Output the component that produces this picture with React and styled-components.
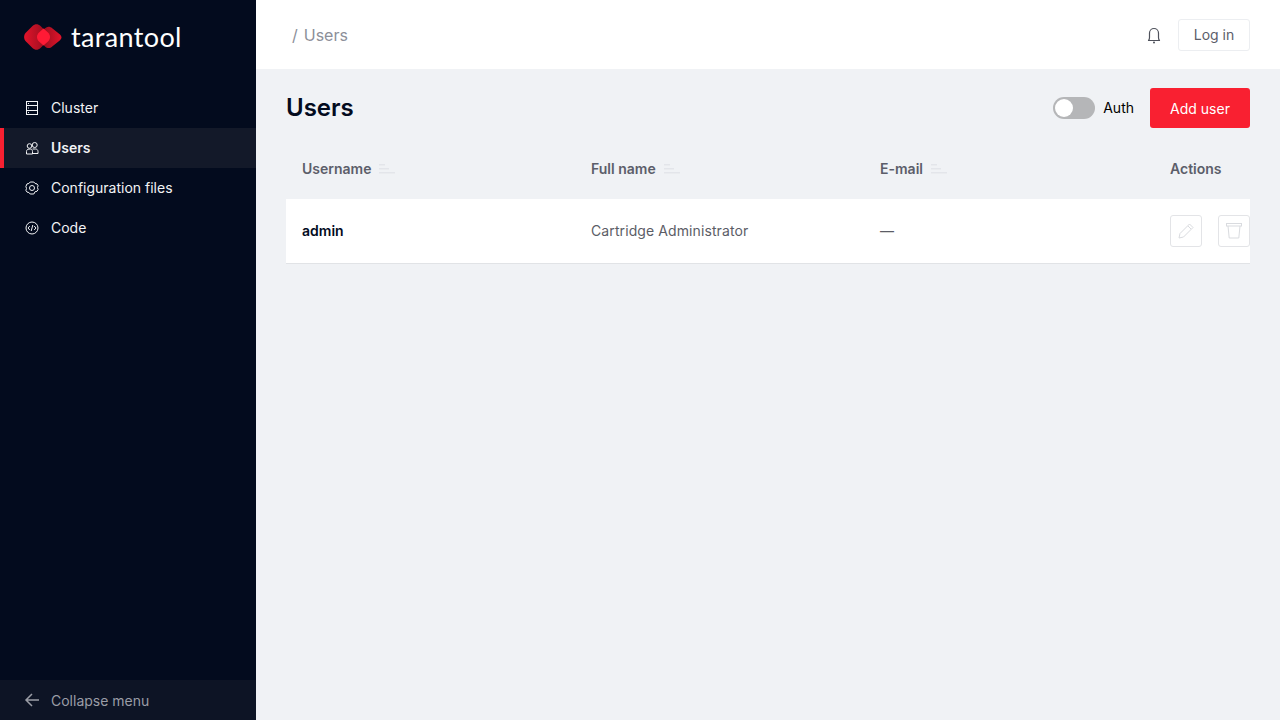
import React from 'react'
import styled, { createGlobalStyle } from 'styled-components'

const GlobalStyle = createGlobalStyle`
    html, body {
        margin: 0;
        padding: 0;
        height: 100%;
        background: #f0f2f5;
        font-family: Inter, "Liberation Sans", sans-serif;
    }
    * {
        box-sizing: border-box;
    }
`;

const Page = styled.div`
    display: flex;
    width: 1280px;
    height: 720px;
    overflow: hidden;
`;

const Sidebar = styled.aside`
    display: flex;
    flex-direction: column;
    flex: 0 0 256px;
    background: #030b1e;
`;

const LogoRow = styled.div`
    display: flex;
    align-items: center;
    gap: 9px;
    height: 74px;
    padding-left: 24px;
`;

const LogoText = styled.span`
    color: #fff;
    font-family: Lato, sans-serif;
    font-size: 27px;
    font-weight: 400;
    letter-spacing: 0.35px;
    line-height: 28px;
`;

const Nav = styled.nav`
    display: flex;
    flex-direction: column;
    flex: 1;
    padding-top: 14px;
`;

const NavItem = styled.a`
    display: flex;
    align-items: center;
    gap: 11px;
    height: 40px;
    padding-left: ${p => (p.$active ? '20px' : '24px')};
    border-left: ${p => (p.$active ? '4px solid #f92031' : 'none')};
    background: ${p => (p.$active ? '#131929' : 'transparent')};
    color: #f2f3f5;
    font-size: 14px;
    font-weight: ${p => (p.$active ? 600 : 400)};
    line-height: 20px;
`;

const Collapse = styled.div`
    display: flex;
    align-items: center;
    gap: 11px;
    height: 40px;
    padding-left: 24px;
    background: #0d1425;
    color: #9a9da6;
    font-size: 14px;
`;

const Main = styled.main`
    display: flex;
    flex-direction: column;
    flex: 1;
    min-width: 0;
`;

const TopBar = styled.header`
    display: flex;
    align-items: center;
    justify-content: space-between;
    height: 69px;
    padding: 0 30px 0 36px;
    background: #fff;
`;

const Breadcrumb = styled.div`
    display: flex;
    gap: 6px;
    color: #8c8f99;
    font-size: 16px;
    line-height: 22px;
`;

const TopActions = styled.div`
    display: flex;
    align-items: center;
    gap: 16px;
`;

const LoginButton = styled.button`
    width: 72px;
    height: 32px;
    padding: 0;
    background: #fff;
    border: 1px solid #eceef1;
    border-radius: 3px;
    color: #5c5e6a;
    font-family: inherit;
    font-size: 14px;
`;

const Content = styled.section`
    display: flex;
    flex-direction: column;
    padding: 19px 30px 0;
`;

const TitleRow = styled.div`
    display: flex;
    align-items: center;
    justify-content: space-between;
    height: 40px;
`;

const Title = styled.h1`
    margin: 0;
    color: #030b1e;
    font-size: 24px;
    font-weight: 600;
    line-height: 32px;
`;

const TitleActions = styled.div`
    display: flex;
    align-items: center;
`;

const Toggle = styled.span`
    position: relative;
    display: block;
    width: 42px;
    height: 22px;
    border-radius: 11px;
    background: #b5b6b8;
    &::after {
        content: '';
        position: absolute;
        left: 2px;
        top: 2px;
        width: 18px;
        height: 18px;
        border-radius: 50%;
        background: #fff;
    }
`;

const ToggleLabel = styled.span`
    margin: 0 16px 0 8px;
    color: #000;
    font-size: 14px;
    line-height: 20px;
`;

const AddButton = styled.button`
    width: 100px;
    height: 40px;
    padding: 0;
    background: #f92031;
    border: none;
    border-radius: 3px;
    color: #fff;
    font-family: inherit;
    font-size: 14px;
`;

const Table = styled.div`
    display: flex;
    flex-direction: column;
    margin-top: 11px;
`;

const Row = styled.div`
    display: grid;
    grid-template-columns: 289px 289px 290px 1fr;
    align-items: center;
    height: ${p => (p.$head ? '60px' : '65px')};
    padding-left: 16px;
    background: ${p => (p.$head ? 'transparent' : '#fff')};
    border-bottom: ${p => (p.$head ? 'none' : '1px solid #e1e3e6')};
`;

const HeadCell = styled.div`
    display: flex;
    align-items: center;
    gap: 8px;
    color: #5c5e6a;
    font-size: 14px;
    font-weight: 600;
    line-height: 20px;
`;

const Cell = styled.div`
    color: ${p => (p.$strong ? '#030b1e' : '#5b5d66')};
    font-size: 14px;
    font-weight: ${p => (p.$strong ? 600 : 400)};
    letter-spacing: ${p => (p.$strong ? 0 : '0.1px')};
    line-height: 20px;
`;

const ActionCell = styled.div`
    display: flex;
    gap: 16px;
`;

const IconButton = styled.button`
    display: flex;
    align-items: center;
    justify-content: center;
    width: 32px;
    height: 32px;
    padding: 0;
    background: #fff;
    border: 1px solid #e3e4e7;
    border-radius: 3px;
`;

const SortIcon = () => (
    <svg width="16" height="10" viewBox="0 0 16 10" fill="#e3e5ea">
        <rect x="0" y="0" width="6" height="1.5" />
        <rect x="0" y="4" width="10" height="1.5" />
        <rect x="0" y="8" width="16" height="1.5" />
    </svg>
);

const ClusterIcon = () => (
    <svg width="16" height="16" viewBox="0 0 16 16" fill="none" stroke="#f2f3f5">
        <rect x="2.5" y="1.5" width="11" height="13" />
        <path d="M2.5 5.5h11M2.5 10.5h11" />
        <path d="M4 3.5h1M4 8h1M4 12.5h1" />
    </svg>
);

const UsersIcon = () => (
    <svg width="16" height="16" viewBox="0 0 16 16" fill="none" stroke="#f2f3f5">
        <circle cx="5.5" cy="6" r="2.3" />
        <circle cx="10.7" cy="5" r="2.5" />
        <path d="M2.5 14v-2.5c0-1.4 1-2.4 2.5-2.4h1.5c1.3 0 2 1 2 2.4V14z" />
        <path d="M8.5 9h3c1.400 0 2.500 1 2.500 2.400V13.500H8.500" />
    </svg>
);

const GearIcon = () => (
    <svg width="16" height="16" viewBox="0 0 16 16" fill="none" stroke="#f2f3f5">
        <circle cx="8" cy="8" r="2.500" />
        <path d="M6.200 2h3.600l1.300 1.500 1.900.4 1.100 1.800-.6 1.900.6 1.900-1.100 1.800-1.900.4L9.800 14H6.200l-1.300-1.500-1.900-.4-1.100-1.800.6-1.900-.6-1.900L3 3.900l1.900-.4z" strokeLinejoin="round" />
    </svg>
);

const CodeIcon = () => (
    <svg width="16" height="16" viewBox="0 0 16 16" fill="none" stroke="#f2f3f5">
        <circle cx="8" cy="8" r="6" />
        <path d="M5.800 6 4 8l1.800 2M10.200 6 12 8l-1.800 2M8.800 5l-1.600 6" />
    </svg>
);

const BackIcon = () => (
    <svg width="16" height="16" viewBox="0 0 16 16" fill="none" stroke="#9a9da6" strokeWidth="1.500">
        <path d="M15 8H2M8 2 2 8l6 6" />
    </svg>
);

const BellIcon = () => (
    <svg width="16" height="18" viewBox="0 0 16 18" fill="none" stroke="#4f525c" strokeWidth="1.200">
        <path d="M2.500 14.500c.8-.8 1-1.600 1-3V7a4.500 4.500 0 0 1 9 0v4.500c0 1.400.2 2.200 1 3z" strokeLinejoin="round" />
        <circle cx="8" cy="16.400" r="1" fill="#4f525c" stroke="none" />
    </svg>
);

const PencilIcon = () => (
    <svg width="16" height="16" viewBox="0 0 16 16" fill="none" stroke="#d9dbdf">
        <path d="M1 15l1-4.500L11.500 1 15 4.500 5.500 14z" strokeLinejoin="round" />
        <path d="M10 3l3 3" />
    </svg>
);

const BucketIcon = () => (
    <svg width="16" height="16" viewBox="0 0 16 16" fill="none" stroke="#d9dbdf">
        <rect x="0.500" y="0.500" width="15" height="2.500" />
        <path d="M2 3l1.200 12h9.600L14 3" />
    </svg>
);

const Logo = () => (
    <svg width="38" height="28" viewBox="0 0 38 28">
        <defs>
            <linearGradient id="logoLeft" x1="0" x2="1" y1="0" y2="0">
                <stop offset="0" stopColor="#e3132a" />
                <stop offset="1" stopColor="#8c0f1e" />
            </linearGradient>
            <linearGradient id="logoRight" x1="0" x2="1" y1="0" y2="0">
                <stop offset="0" stopColor="#8c0f1e" />
                <stop offset="1" stopColor="#e3132a" />
            </linearGradient>
        </defs>
        <path d="M8.500 3C11 .6 14 .6 16.500 3L23 9.500c2.500 2.500 2.500 6.500 0 9L16.500 25c-2.500 2.400-5.500 2.400-8 0L2 18.500c-2.500-2.500-2.500-6.500 0-9z" fill="url(#logoLeft)" />
        <path d="M21 5.200c2.200-2 5-2 7.200 0l7.800 6.300c2 2 2 3.800 0 5.800l-7.800 6.300c-2.200 2-5 2-7.200 0L16 18.500v-9z" fill="url(#logoRight)" />
        <path d="M19.500 5.500 24 9.500c2.700 2.700 2.700 6.300 0 9l-4.500 4-4.500-4c-2.700-2.700-2.700-6.300 0-9z" fill="#ff1a35" />
    </svg>
);

const App = () => {
    return (
        <Page>
            <GlobalStyle />
            <Sidebar>
                <LogoRow>
                    <Logo />
                    <LogoText>tarantool</LogoText>
                </LogoRow>
                <Nav>
                    <NavItem><ClusterIcon />Cluster</NavItem>
                    <NavItem $active><UsersIcon />Users</NavItem>
                    <NavItem><GearIcon />Configuration files</NavItem>
                    <NavItem><CodeIcon />Code</NavItem>
                </Nav>
                <Collapse><BackIcon />Collapse menu</Collapse>
            </Sidebar>
            <Main>
                <TopBar>
                    <Breadcrumb><span>/</span><span>Users</span></Breadcrumb>
                    <TopActions>
                        <BellIcon />
                        <LoginButton>Log in</LoginButton>
                    </TopActions>
                </TopBar>
                <Content>
                    <TitleRow>
                        <Title>Users</Title>
                        <TitleActions>
                            <Toggle />
                            <ToggleLabel>Auth</ToggleLabel>
                            <AddButton>Add user</AddButton>
                        </TitleActions>
                    </TitleRow>
                    <Table>
                        <Row $head>
                            <HeadCell>Username <SortIcon /></HeadCell>
                            <HeadCell>Full name <SortIcon /></HeadCell>
                            <HeadCell>E-mail <SortIcon /></HeadCell>
                            <HeadCell>Actions</HeadCell>
                        </Row>
                        <Row>
                            <Cell $strong>admin</Cell>
                            <Cell>Cartridge Administrator</Cell>
                            <Cell>—</Cell>
                            <ActionCell>
                                <IconButton><PencilIcon /></IconButton>
                                <IconButton><BucketIcon /></IconButton>
                            </ActionCell>
                        </Row>
                    </Table>
                </Content>
            </Main>
        </Page>
    )
}

export default App
